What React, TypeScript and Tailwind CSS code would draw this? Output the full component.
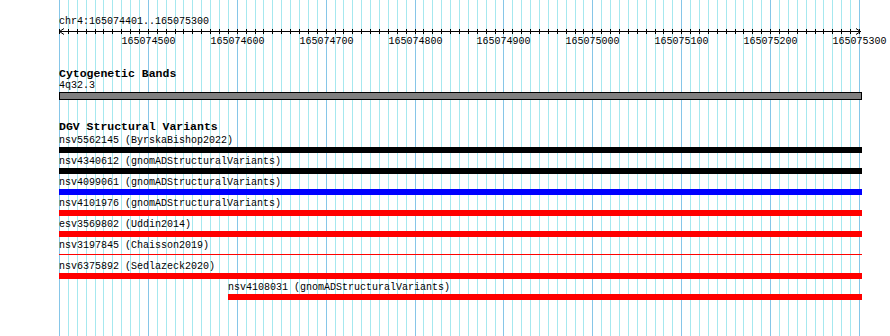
import React from "react";

const START = 165074400;
const SCALE = 800 / 900; // px per bp
const LEFT = 59;

type Variant = {
  label: string;
  color: string;
  offset?: number;
  thin?: boolean;
};

const variants: Variant[] = [
  { label: "nsv5562145 (ByrskaBishop2022)", color: "bg-black" },
  { label: "nsv4340612 (gnomADStructuralVariants)", color: "bg-black" },
  { label: "nsv4099061 (gnomADStructuralVariants)", color: "bg-[#0000ff]" },
  { label: "nsv4101976 (gnomADStructuralVariants)", color: "bg-[#ff0000]" },
  { label: "esv3569802 (Uddin2014)", color: "bg-[#ff0000]" },
  { label: "nsv3197845 (Chaisson2019)", color: "bg-[#ff0000]", thin: true },
  { label: "nsv6375892 (Sedlazeck2020)", color: "bg-[#ff0000]" },
  { label: "nsv4108031 (gnomADStructuralVariants)", color: "bg-[#ff0000]", offset: 169 },
];

const Grid: React.FC = () => (
  <svg className="absolute left-0 top-0" width={890} height={336}>
    {Array.from({ length: 91 }, (_, i) => (
      <rect
        key={i}
        x={Math.round(LEFT + i * 10 * SCALE)}
        y={0}
        width={1}
        height={336}
        fill={i % 10 === 0 ? "#86c6e8" : "#a6e8ef"}
      />
    ))}
  </svg>
);

const Ruler: React.FC = () => {
  const y = 3.5;
  return (
    <svg width={831} height={22} className="block overflow-visible">
      <line x1={0} y1={y} x2={802} y2={y} stroke="#000" strokeWidth={1} />
      <polyline points={`5,${y - 3} 0.5,${y} 5,${y + 3}`} fill="none" stroke="#000" />
      <polyline points={`797,${y - 3} 801.5,${y} 797,${y + 3}`} fill="none" stroke="#000" />
      {Array.from({ length: 91 }, (_, i) => {
        const x = Math.round(i * 10 * SCALE) + 0.5;
        return <line key={i} x1={x} y1={1} x2={x} y2={6} stroke="#000" />;
      })}
      {Array.from({ length: 9 }, (_, k) => {
        const bp = START + (k + 1) * 100;
        const x = Math.round((bp - START) * SCALE) + 0.5;
        return (
          <text
            key={bp}
            x={x}
            y={16}
            textAnchor="middle"
            fontFamily="'Liberation Mono', monospace"
            fontSize={10}
            fill="#000"
          >
            {bp}
          </text>
        );
      })}
    </svg>
  );
};

const VariantRow: React.FC<Variant> = ({ label, color, offset = 0, thin }) => (
  <div className="h-[21px]" style={{ paddingLeft: offset }}>
    <div className="h-[12px] text-[10px] leading-[12px] whitespace-nowrap">{label}</div>
    {thin ? (
      <div className="h-[6px] pt-[2px]">
        <div className={`h-px ${color}`} />
      </div>
    ) : (
      <div className={`h-[6px] ${color}`} />
    )}
  </div>
);

export default function App() {
  return (
    <div className="relative w-[890px] h-[336px] overflow-hidden bg-white text-black font-['Liberation_Mono',monospace]">
      <Grid />
      <div className="relative ml-[59px] w-[803px]">
        <div className="mt-[16px] h-[12px] text-[10px] leading-[12px]">chr4:165074401..165075300</div>
        <Ruler />

        <div className="mt-[18px]">
          <div className="h-[12px] text-[11.5px] font-bold leading-[12px]">Cytogenetic Bands</div>
          <div className="h-[12px] text-[10px] leading-[12px]">4q32.3</div>
          <div className="h-[8px] border border-black bg-[#808080]" />
        </div>

        <div className="mt-[21px]">
          <div className="h-[12px] text-[11.5px] font-bold leading-[12px]">DGV Structural Variants</div>
          <div className="mt-[2px]">
            {variants.map((v) => (
              <VariantRow key={v.label} {...v} />
            ))}
          </div>
        </div>
      </div>
    </div>
  );
}
